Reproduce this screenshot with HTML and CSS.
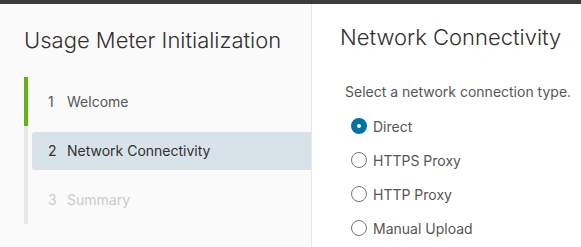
FILE: index.html
```html
<!DOCTYPE html>
<html lang="en">
<head>
    <meta charset="UTF-8">
    <meta name="viewport" content="width=device-width, initial-scale=1.0">
    <title>Usage Meter Initialization</title>
    <link rel="stylesheet" href="styles.css">
</head>
<body>

    <div class="wizard">
        <!-- Step navigation -->
        <nav class="wizard-nav">
            <h1 class="wizard-title">Usage Meter Initialization</h1>
            <ol class="steps">
                <li class="step done"><span class="step-num">1</span>Welcome</li>
                <li class="step current"><span class="step-num">2</span>Network Connectivity</li>
                <li class="step todo"><span class="step-num">3</span>Summary</li>
            </ol>
        </nav>

        <!-- Page content -->
        <main class="wizard-page">
            <h2 class="page-title">Network Connectivity</h2>
            <p class="page-lead">Select a network connection type.</p>
            <div class="radio-list">
                <label class="radio"><input type="radio" name="conn" checked><span class="dot"></span>Direct</label>
                <label class="radio"><input type="radio" name="conn"><span class="dot"></span>HTTPS Proxy</label>
                <label class="radio"><input type="radio" name="conn"><span class="dot"></span>HTTP Proxy</label>
                <label class="radio"><input type="radio" name="conn"><span class="dot"></span>Manual Upload</label>
            </div>
        </main>
    </div>

</body>
</html>
```

FILE: styles.css
```css
body {
    margin: 0;
    font-family: Inter, "Open Sans", sans-serif;
    color: #565656;
    background: #fff;
}

.wizard {
    display: flex;
    height: 247px;
    border-top: 4px solid #3d3d3d;
    box-sizing: border-box;
    overflow: hidden;
}

/* left column */
.wizard-nav {
    width: 311px;
    flex: none;
    background: #fafafa;
    border-right: 1px solid #e8e8e8;
    padding-top: 22px;
}

.wizard-title {
    margin: 0 0 23px 24px;
    font-size: 22px;
    font-weight: 300;
    line-height: 28px;
    color: #313131;
    white-space: nowrap;
}

.steps {
    list-style: none;
    margin: 0 0 0 24px;
    padding: 0;
}

.step {
    height: 49px;
    display: flex;
    align-items: center;
    border-left: 4px solid #e8e8e8;
    padding-left: 20px;
    font-size: 14px;
    position: relative;
    z-index: 0;
}

.step-num {
    width: 19px;
}

.step.done {
    border-left-color: #60b515;
}

.step.current {
    color: #313131;
}

.step.current::before {
    content: '';
    position: absolute;
    left: 4px;
    right: 0;
    top: 6px;
    bottom: 5px;
    z-index: -1;
    background: #d8e3e9;
    border-radius: 3px 0 0 3px;
}

.step.todo {
    color: #cccccc;
}

/* right column */
.wizard-page {
    flex: 1;
    padding: 19px 0 0 28px;
}

.page-title {
    margin: 0;
    font-size: 22px;
    font-weight: 300;
    line-height: 28px;
    color: #313131;
    white-space: nowrap;
}

.page-lead {
    margin: 31px 0 0 5px;
    font-size: 14px;
    line-height: 20px;
}

.radio-list {
    margin: 7px 0 0 11px;
    display: flex;
    flex-direction: column;
}

.radio {
    height: 34px;
    display: flex;
    align-items: center;
    font-size: 14px;
}

.radio input {
    display: none;
}

.dot {
    width: 16px;
    height: 16px;
    border: 1px solid #747474;
    border-radius: 50%;
    margin-right: 6px;
    box-sizing: border-box;
    background: #fff;
}

.radio input:checked + .dot {
    border: 6px solid #0072a3;
}
```
